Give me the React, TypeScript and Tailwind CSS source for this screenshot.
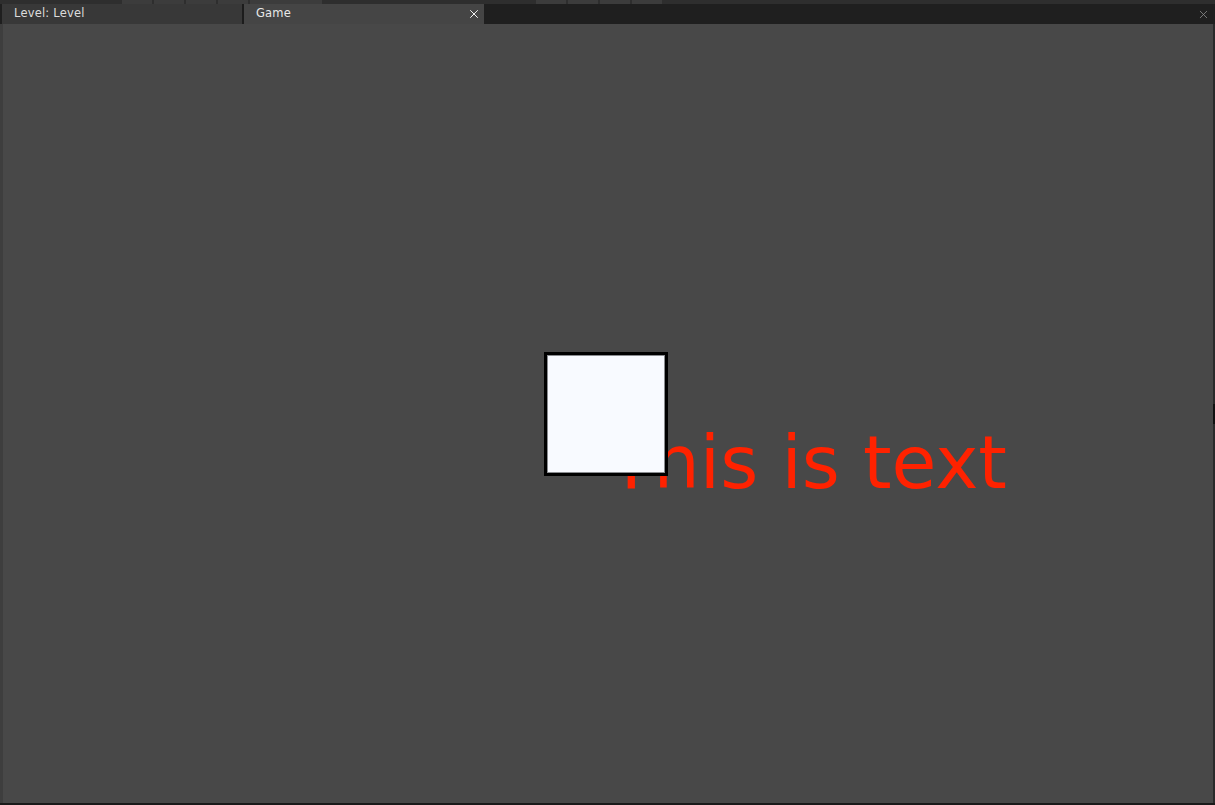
import { X } from "lucide-react";

const topButtons = [
  { w: 30 }, { w: 30 }, { w: 30 }, { w: 30 }, { w: 72 },
];
const topButtonsRight = [{ w: 30 }, { w: 30 }, { w: 30 }, { w: 30 }];

function TabBar() {
  return (
    <div className="flex h-5 bg-[#1f1f1f] pl-[2px] font-['DejaVu_Sans',sans-serif] text-[11.5px] tracking-[0.2px]">
      <div className="flex w-[240px] items-center bg-[#383838] pl-3 text-[#dcdcdc]">Level: Level</div>
      <div className="w-[2px] bg-[#1c1c1c]" />
      <div className="flex w-[240px] items-center justify-between bg-[#454545] pl-3 pr-[3px] text-[#e8e8e8]">
        <span>Game</span>
        <X className="h-[14px] w-[14px] text-white" strokeWidth={1.6} />
      </div>
      <div className="flex flex-1 items-center justify-end pr-[5px]">
        <X className="h-[13px] w-[13px] text-[#8a8a8a]" strokeWidth={1.5} />
      </div>
    </div>
  );
}

function Scene() {
  return (
    <div className="relative flex-1 overflow-hidden bg-[#484848]">
      <div className="absolute inset-y-0 left-0 w-[3px] bg-[#3e3e3e]" />
      <div className="absolute inset-y-0 right-0 w-[2px] bg-[#2a2a2a]" />
      <div className="absolute right-0 top-[380px] h-[20px] w-[2px] bg-[#111]" />
      {/* red label sits under the sprite */}
      <div className="absolute left-[609px] top-[402px] whitespace-nowrap font-['DejaVu_Sans',sans-serif] text-[73px] leading-none text-[#ff2200]">
        This is text
      </div>
      <div className="absolute left-[544px] top-[328px] h-[124px] w-[124px] border-[3px] border-black bg-[#f8faff] shadow-[inset_0_0_0_1px_#8a8c90]" />
    </div>
  );
}

export default function App() {
  return (
    <div className="flex h-[805px] w-[1215px] flex-col bg-[#1a1a1a]">
      <div className="flex h-[4px] gap-[2px] bg-[#2e2e2e]">
        <div className="w-[120px]" />
        {topButtons.map((b, i) => (
          <div key={i} className="bg-[#3c3c3c]" style={{ width: b.w }} />
        ))}
        <div className="w-[210px]" />
        {topButtonsRight.map((b, i) => (
          <div key={i} className="bg-[#3c3c3c]" style={{ width: b.w }} />
        ))}
      </div>
      <TabBar />
      <Scene />
      <div className="h-[2px] bg-[#1a1a1a]" />
    </div>
  );
}
